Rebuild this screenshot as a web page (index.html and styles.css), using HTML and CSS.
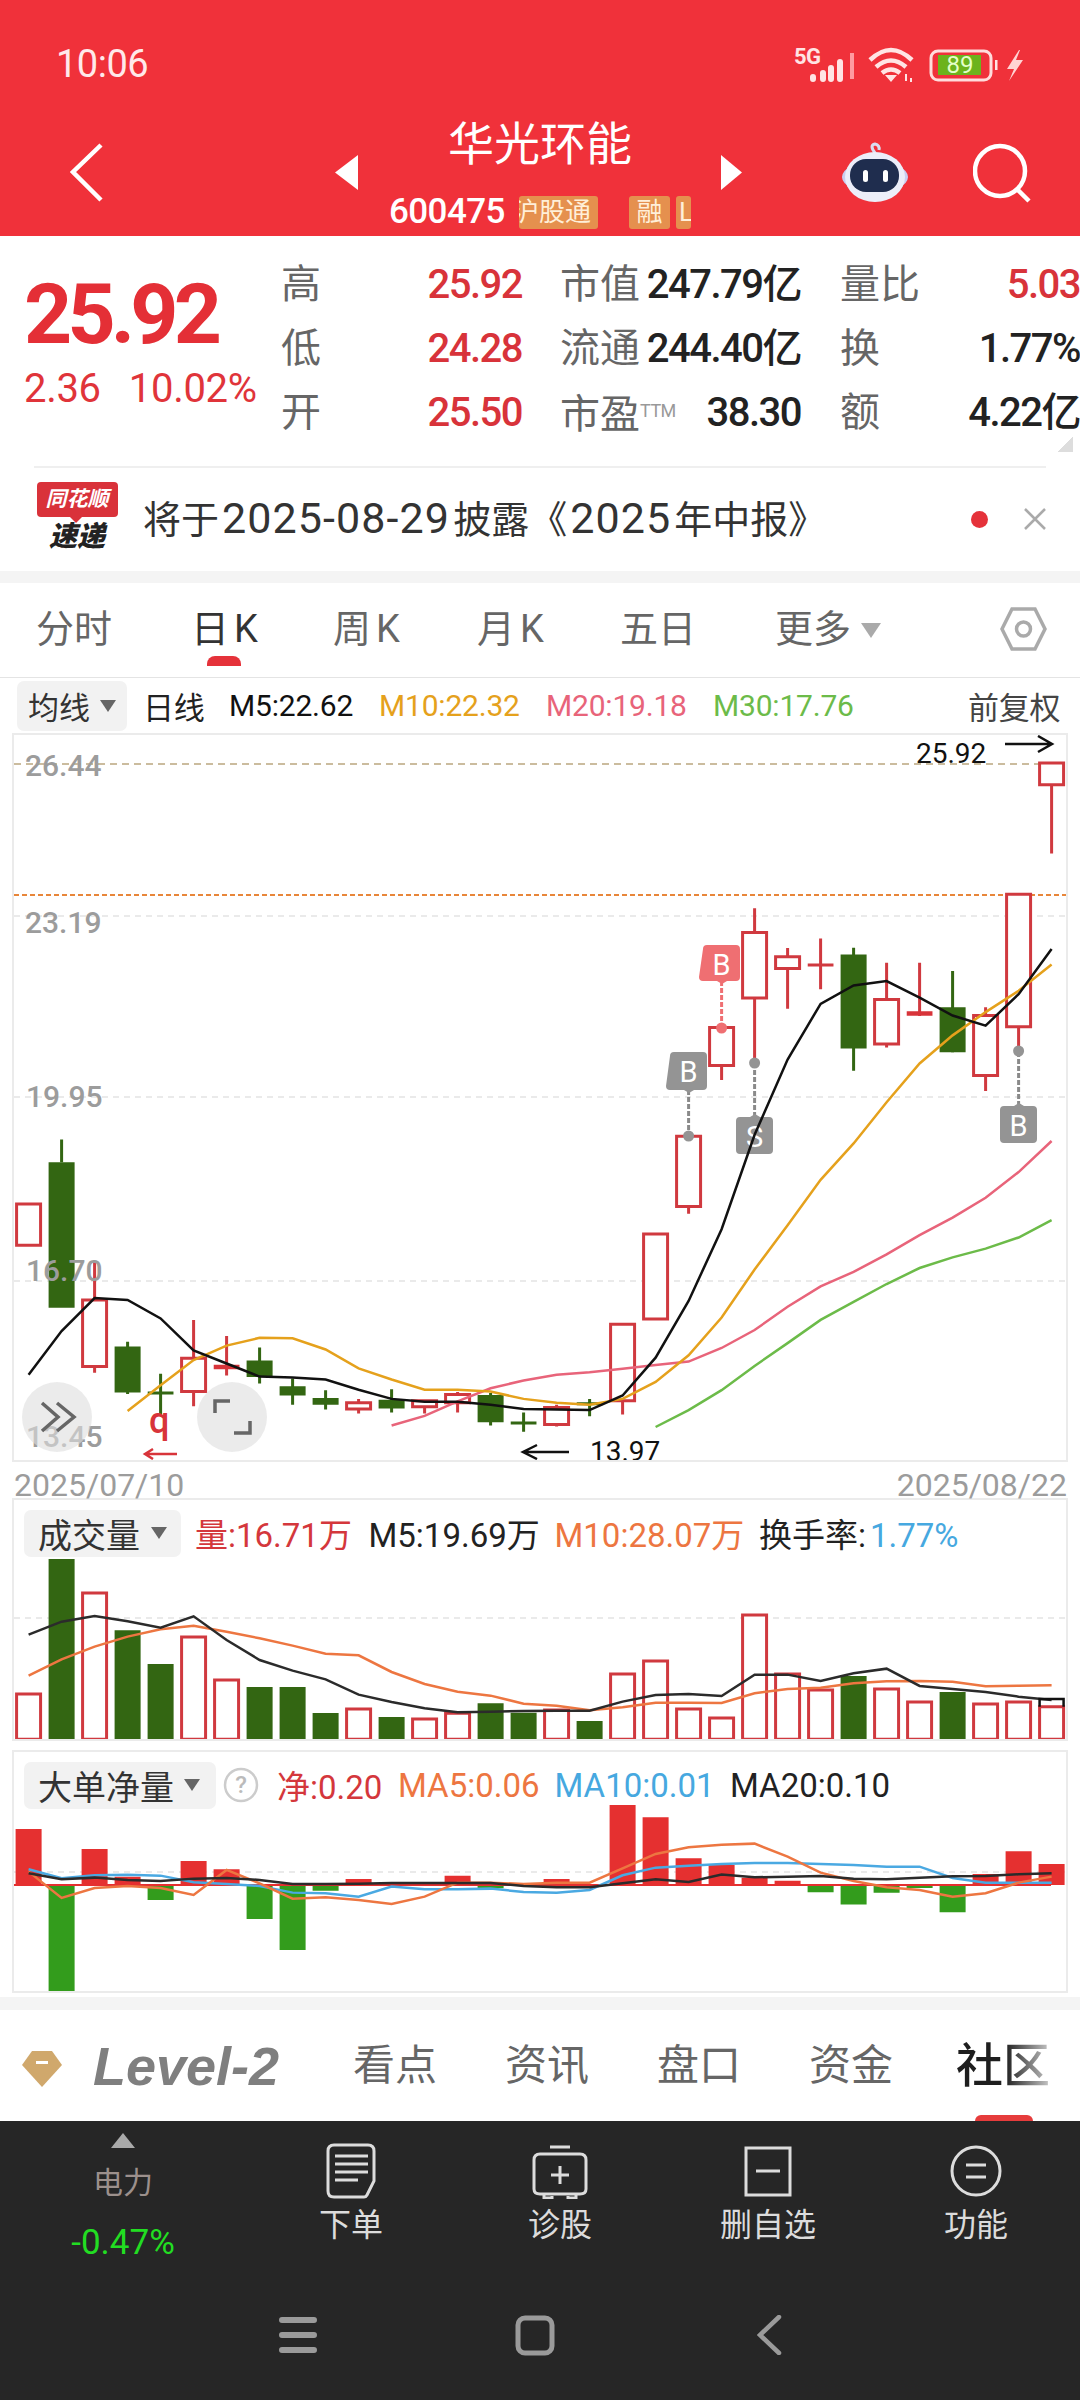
FILE: index.html
```html
<!DOCTYPE html>
<html lang="zh-CN">
<head>
<meta charset="utf-8">
<title>华光环能</title>
<link rel="stylesheet" href="styles.css">
</head>
<body>
<div class="page">
  <header class="header">
    <div class="status">
      <span class="time">10:06</span>
      <svg class="status-icons" width="235" height="40" viewBox="792 45 235 40">
        <text class="st-5g" x="794" y="64">5G</text>
        <path class="st-bars" d="M813 77v2M823 73v6M831 68v11M840 62v17"/>
        <path class="st-bar-last" d="M852 53v26"/>
        <path class="st-wifi" d="M870 60Q891 40 912 60M876 67Q891 54 906 67M882 73Q891 66 900 73"/>
        <path class="st-fill" d="M885 75h12l-6 7zM905 74v7h2v-7zM910 78v4h2v-4z"/>
        <rect class="st-batt" x="931" y="51" width="60" height="29" rx="7"/>
        <rect class="st-level" x="938" y="55" width="43" height="20"/>
        <text class="st-pct" x="960" y="73">89</text>
        <rect class="st-fill" x="995" y="60" width="2.5" height="10"/>
        <path class="st-bolt" d="M1019 50L1007 69h7l-5 12 14-21h-7l4-10z"/>
      </svg>
    </div>
    <div class="nav">
      <svg class="nav-back" width="33" height="59" viewBox="0 0 33 59"><path d="M31 2L3 29l28 28"/></svg>
      <svg class="nav-prev" width="23" height="35" viewBox="0 0 23 35"><path d="M23 0v35L0 17.500z"/></svg>
      <div class="stock">
        <div class="stock-name">华光环能</div>
        <div class="stock-sub">
          <span class="stock-code">600475</span>
          <span class="tag tag-hgt"><span class="tag-cut">沪股通</span></span>
          <span class="tag tag-rong">融</span>
          <span class="tag tag-l">L</span>
        </div>
      </div>
      <svg class="nav-next" width="21" height="35" viewBox="0 0 21 35"><path d="M0 0v35L21 17.500z"/></svg>
      <svg class="nav-robot" width="66" height="60" viewBox="842 141 66 60">
        <path class="rb-ant" d="M875 152q-6-8 0-9 5 1 4 6"/>
        <ellipse class="rb-ear" cx="875" cy="176" rx="33" ry="16"/>
        <ellipse class="rb-head" cx="875" cy="176" rx="30" ry="25"/>
        <rect class="rb-face" x="850" y="158" width="49" height="33" rx="16"/>
        <rect class="rb-eye" x="863" y="169" width="5" height="12" rx="2.500"/>
        <rect class="rb-eye" x="883" y="169" width="5" height="12" rx="2.500"/>
      </svg>
      <svg class="nav-search" width="58" height="62" viewBox="973 142 58 62"><circle cx="1000" cy="172" r="25"/><path d="M1017 190l12 12"/></svg>
    </div>
  </header>

  <section class="quote">
    <div class="quote-main">
      <div class="price-box">
        <div class="price">25.92</div>
        <div class="change"><span>2.36</span><span>10.02%</span></div>
      </div>
      <div class="stats">
        <span class="s-label">高</span><span class="s-val red">25.92</span>
        <span class="s-label">市值</span><span class="s-val">247.79亿</span>
        <span class="s-label">量比</span><span class="s-val red">5.03</span>
        <span class="s-label">低</span><span class="s-val red">24.28</span>
        <span class="s-label">流通</span><span class="s-val">244.40亿</span>
        <span class="s-label">换</span><span class="s-val">1.77%</span>
        <span class="s-label">开</span><span class="s-val red">25.50</span>
        <span class="s-label">市盈<span class="ttm">TTM</span></span><span class="s-val">38.30</span>
        <span class="s-label">额</span><span class="s-val">4.22亿</span>
      </div>
    </div>
    <div class="corner-row"><span class="corner"></span></div>
    <div class="notice">
      <div class="logo">
        <span class="logo-top">同花顺</span>
        <span class="logo-bot">速递</span>
      </div>
      <span class="notice-text">将于<span class="num">2025-08-29</span>披露《<span class="num">2025</span>年中报》</span>
      <span class="notice-dot"></span>
      <svg class="notice-x" width="22" height="22" viewBox="0 0 22 22"><path d="M1 1l20 20M21 1L1 21"/></svg>
    </div>
  </section>

  <nav class="tabs">
    <span class="tab">分时</span>
    <span class="tab tab-on">日K</span>
    <span class="tab">周K</span>
    <span class="tab">月K</span>
    <span class="tab">五日</span>
    <span class="tab tab-more">更多<i class="tri-more"></i></span>
    <svg class="tab-gear" width="47" height="44" viewBox="0 0 47 44"><path d="M12 2h23l10 20-10 20H12L2 22z"/><circle cx="23.500" cy="22" r="7"/></svg>
  </nav>

  <div class="ma-row">
    <span class="pick pick-ma">均线<i class="tri"></i></span>
    <span class="ma dark">日线</span>
    <span class="ma black">M5:22.62</span>
    <span class="ma c-m10">M10:22.32</span>
    <span class="ma c-m20">M20:19.18</span>
    <span class="ma c-m30">M30:17.76</span>
    <span class="ma fq">前复权</span>
  </div>

  <div class="chart chart-main">
    <svg class="plot-svg" width="1052" height="725" viewBox="14 735 1052 725">
      <path class="grid-gray" d="M14 916H1066M14 1097H1066M14 1281H1066"/>
      <path class="grid-tan" d="M14 764H1066"/>
      <path class="grid-orange" d="M14 895H1066"/>
      <g class="plot" transform="translate(28.600 730) scale(33 .4847)">
        <path class="wick-g" d="M1 845V892M3 1262V1370M4 1328V1415M7 1274V1348M8 1338V1392M9 1362V1402M11 1360V1408M14 1368V1435M15 1408V1448M17 1380V1416M25 449V703M28 497V665M3.610 1368h.78M14.610 1430h.78M16.610 1390h.78"/>
        <path class="wick-r" d="M2 1098V1326M5 1217V1395M6 1250V1332M10 1380V1410M12 1384V1410M13 1366V1408M16 1392V1437M18 1226V1412M20 838V998M21 614V722M22 368V690M23 450V575M24 430V535M26 480V655M27 480V590M29 572V745M30 612V665M31 68V255M23.610 485h.78"/>
        <path class="doji" d="M5.610 1314h.78M26.610 585h.78"/>
        <path class="body-g" d="M.606 892h.788V1192h-.788zM2.606 1272h.788V1367h-.788zM6.606 1301h.788V1335h-.788zM7.606 1354h.788V1373h-.788zM8.606 1378h.788V1392h-.788zM10.606 1382h.788V1400h-.788zM13.606 1372h.788V1428h-.788zM24.606 463h.788V657h-.788zM27.606 572h.788V665h-.788z"/>
        <path class="body-r" d="M-.364 978h.727V1063h-.727zM1.636 1176h.727V1313h-.727zM4.636 1296h.727V1365h-.727zM9.636 1388h.727V1401h-.727zM11.636 1384h.727V1396h-.727zM12.636 1371h.727V1388h-.727zM15.636 1398h.727V1433h-.727zM17.636 1226h.727V1384h-.727zM18.636 1040h.727V1215h-.727zM19.636 838h.727V983h-.727zM20.636 614h.727V692h-.727zM21.636 418h.727V553h-.727zM22.636 468h.727V492h-.727zM25.636 556h.727V648h-.727zM28.636 589h.727V713h-.727zM29.636 339h.727V612h-.727zM30.636 68h.727V113h-.727z"/>
      </g>
      <g class="axis">
        <text x="25" y="776">26.44</text>
        <text x="25" y="933">23.19</text>
        <text x="26" y="1107">19.95</text>
        <text x="26" y="1281">16.70</text>
        <text x="26" y="1447">13.45</text>
      </g>
      <g class="trade-gray">
        <path class="trade-dash" d="M688.600 1090V1136"/>
        <circle cx="688.600" cy="1136" r="5.500"/>
        <path d="M670 1056q0-4 4-4h29q4 0 4 4v30q0 4-4 4h-9l-5 3-5-3h-14q-4 0-4-4z"/>
        <text x="688.600" y="1082">B</text>
        <path class="trade-dash" d="M754.600 1117V1063"/>
        <circle cx="754.600" cy="1063" r="5.500"/>
        <path d="M736 1121q0-4 4-4h10l5-3 5 3h9q4 0 4 4v29q0 4-4 4h-29q-4 0-4-4z"/>
        <text x="754.600" y="1147">S</text>
        <path class="trade-dash" d="M1018.600 1106V1051"/>
        <circle cx="1018.600" cy="1051" r="5.500"/>
        <path d="M1000 1110q0-4 4-4h10l5-3 5 3h9q4 0 4 4v29q0 4-4 4h-29q-4 0-4-4z"/>
        <text x="1018.600" y="1136">B</text>
      </g>
      <g class="trade-pink">
        <path class="trade-dash" d="M721.600 981V1028"/>
        <circle cx="721.600" cy="1028" r="5.500"/>
        <path d="M703 949q0-4 4-4h29q4 0 4 4v28q0 4-4 4h-9l-5 3-5-3h-14q-4 0-4-4z"/>
        <text x="721.600" y="975">B</text>
      </g>
      <g class="plot" transform="translate(28.600 730) scale(33 .4847)">
        <polyline class="ln-green" points="19,1438 20,1403 21,1362 22,1312 23,1265 24,1217 25,1180 26,1143 27,1110 28,1088 29,1070 30,1047 31,1011"/>
        <polyline class="ln-pink" points="11,1435 12,1415 13,1385 14,1358 15,1342 16,1330 17,1325 18,1318 19,1310 20,1303 21,1275 22,1238 23,1190 24,1148 25,1118 26,1082 27,1042 28,1006 29,965 30,912 31,848"/>
        <polyline class="ln-gold" points="3,1405 4,1352 5,1300 6,1270 7,1254 8,1255 9,1278 10,1317 11,1340 12,1361 13,1361 14,1365 15,1380 16,1388 17,1392 18,1380 19,1345 20,1290 21,1212 22,1113 23,1022 24,928 25,853 26,768 27,688 28,630 29,582 30,538 31,484"/>
        <polyline class="ln-black" points="0,1330 1,1240 2,1172 3,1176 4,1214 5,1280 6,1307 7,1334 8,1336 9,1340 10,1361 11,1380 12,1386 13,1386 14,1392 15,1401 16,1402 17,1403 18,1373 19,1295 20,1178 21,1030 22,835 23,680 24,565 25,527 26,518 27,552 28,589 29,610 30,545 31,452"/>
      </g>
      <text class="mark" x="916" y="763">25.92</text>
      <path class="arrow" d="M1005 744H1052M1038 736L1052 744 1038 752"/>
      <text class="mark" x="590" y="1461">13.97</text>
      <path class="arrow" d="M569 1452H523M537 1445L523 1452 537 1459"/>
      <text class="mark-q" x="149" y="1433">q</text>
      <path class="arrow-red" d="M177 1454H145M153 1449L145 1454 153 1459"/>
      <circle class="float-btn" cx="57" cy="1417" r="35"/>
      <path class="float-ico" d="M42 1403L58 1417 42 1431M57 1403L74 1417 57 1431"/>
      <circle class="float-btn" cx="232" cy="1417" r="35"/>
      <path class="float-ico" d="M215 1413V1401H230M250 1421V1433H234"/>
    </svg>
  </div>

  <div class="dates"><span>2025/07/10</span><span>2025/08/22</span></div>

  <div class="chart chart-sub">
    <div class="sub-head head-vol">
      <span class="pick pick-vol">成交量<i class="tri"></i></span>
      <span class="c-red">量:16.71万</span>
      <span class="c-ink">M5:19.69万</span>
      <span class="c-orange">M10:28.07万</span>
      <span class="c-ink">换手率:<span class="c-blue rate">1.77%</span></span>
    </div>
    <svg class="plot-svg" width="1052" height="239" viewBox="14 1500 1052 239">
      <path class="grid-gray" d="M14 1618H1066"/>
      <g class="plot" transform="translate(28.600 1480) scale(33 .3333)">
        <path class="body-g" d="M.606 237h.788V778h-.788zM2.606 451h.788V778h-.788zM3.606 552h.788V778h-.788zM6.606 621h.788V778h-.788zM7.606 621h.788V778h-.788zM8.606 699h.788V778h-.788zM10.606 711h.788V778h-.788zM13.606 670h.788V778h-.788zM14.606 698h.788V778h-.788zM16.606 723h.788V778h-.788zM24.606 588h.788V778h-.788zM27.606 636h.788V778h-.788z"/>
        <path class="body-r" d="M-.364 642h.727V778h-.727zM1.636 339h.727V778h-.727zM4.636 471h.727V778h-.727zM5.636 600h.727V778h-.727zM9.636 687h.727V778h-.727zM11.636 717h.727V778h-.727zM12.636 700h.727V778h-.727zM15.636 690h.727V778h-.727zM17.636 582h.727V778h-.727zM18.636 543h.727V778h-.727zM19.636 687h.727V778h-.727zM20.636 714h.727V778h-.727zM21.636 405h.727V778h-.727zM22.636 582h.727V778h-.727zM23.636 630h.727V778h-.727zM25.636 627h.727V778h-.727zM26.636 666h.727V778h-.727zM28.636 672h.727V778h-.727zM29.636 666h.727V778h-.727zM30.636 680h.727V778h-.727z"/>
        <polyline class="ln-orange" points="0,587 1,538 2,500 3,470 4,448 5,437 6,455 7,475 8,497 9,521 10,526 11,576 12,612 13,635 14,647 15,671 16,677 17,691 18,682 19,668 20,668 21,669 22,640 23,627 24,623 25,610 26,604 27,603 28,605 29,619 30,617 31,616"/>
        <polyline class="ln-ink" points="0,464 1,425 2,408 3,424 4,443 5,409 6,480 7,540 8,572 9,598 10,644 11,666 12,685 13,697 14,695 15,693 16,692 17,692 18,665 19,645 20,642 21,648 22,584 23,584 24,603 25,580 26,566 27,618 28,627 29,636 30,650 31,660"/>
        <path class="vol-cap" d="M30.636 680V657h.727V680"/>
      </g>
    </svg>
  </div>

  <div class="chart chart-sub chart-net">
    <div class="sub-head head-net">
      <span class="pick-wrap">
        <span class="pick pick-net">大单净量<i class="tri"></i></span>
        <svg class="help" width="36" height="36" viewBox="0 0 36 36"><circle cx="18" cy="18" r="16"/><text x="18" y="26">?</text></svg>
      </span>
      <span class="c-red">净:0.20</span>
      <span class="c-orange">MA5:0.06</span>
      <span class="c-blue">MA10:0.01</span>
      <span class="c-ink">MA20:0.10</span>
    </div>
    <svg class="plot-svg" width="1052" height="239" viewBox="14 1752 1052 239">
      <path class="grid-gray" d="M14 1872H1066"/>
      <g class="plot" transform="translate(28.600 1480) scale(33 .3333)">
        <path class="net-g" d="M.606 1215h.788V1535h-.788zM3.606 1215h.788V1260h-.788zM6.606 1215h.788V1317h-.788zM7.606 1215h.788V1410h-.788zM8.606 1215h.788V1232h-.788zM13.606 1215h.788V1225h-.788zM23.606 1215h.788V1237h-.788zM24.606 1215h.788V1274h-.788zM25.606 1215h.788V1238h-.788zM26.606 1215h.788V1224h-.788zM27.606 1215h.788V1297h-.788z"/>
        <path class="net-r" d="M-.394 1047h.788V1215h-.788zM1.606 1107h.788V1215h-.788zM2.606 1190h.788V1215h-.788zM4.606 1143h.788V1215h-.788zM5.606 1168h.788V1215h-.788zM9.606 1197h.788V1215h-.788zM12.606 1187h.788V1215h-.788zM15.606 1197h.788V1215h-.788zM17.606 975h.788V1215h-.788zM18.606 1012h.788V1215h-.788zM19.606 1135h.788V1215h-.788zM20.606 1155h.788V1215h-.788zM21.606 1193h.788V1215h-.788zM22.606 1202h.788V1215h-.788zM28.606 1182h.788V1215h-.788zM29.606 1114h.788V1215h-.788zM30.606 1152h.788V1215h-.788z"/>
      </g>
      <path class="net-base" d="M14 1885H1051"/>
      <g class="plot" transform="translate(28.600 1480) scale(33 .3333)">
        <polyline class="ln-blue" points="0,1168 1,1195 2,1186 3,1184 4,1187 5,1207 6,1212 7,1218 8,1238 9,1240 10,1250 11,1220 12,1228 13,1228 14,1226 15,1236 16,1238 17,1230 18,1186 19,1163 20,1157 21,1152 22,1149 23,1149 24,1152 25,1155 26,1160 27,1160 28,1194 29,1208 30,1208 31,1208"/>
        <polyline class="ln-orange" points="0,1175 1,1254 2,1224 3,1218 4,1224 5,1245 6,1170 7,1210 8,1256 9,1252 10,1260 11,1272 12,1250 13,1208 14,1208 15,1212 16,1208 17,1208 18,1165 19,1122 20,1102 21,1094 22,1091 23,1130 24,1178 25,1203 26,1222 27,1230 28,1250 29,1240 30,1208 31,1190"/>
        <polyline class="ln-ink" points="0,1180 1,1198 2,1193 3,1200 4,1203 5,1196 6,1194 7,1200 8,1212 9,1212 10,1211 11,1209 12,1209 13,1209 14,1209 15,1218 16,1222 17,1222 18,1210 19,1198 20,1206 21,1184 22,1192 23,1190 24,1188 25,1196 26,1198 27,1193 28,1189 29,1188 30,1183 31,1180"/>
      </g>
    </svg>
  </div>

  <div class="band-bottom"></div>

  <nav class="bottom-tabs">
    <svg class="gem" width="40" height="36" viewBox="0 0 40 36"><path d="M10 0h20l10 14-20 22L0 14z"/><rect x="14" y="10" width="12" height="3"/></svg>
    <span class="level">Level-2</span>
    <span class="btab">看点</span>
    <span class="btab">资讯</span>
    <span class="btab">盘口</span>
    <span class="btab">资金</span>
    <span class="btab btab-on">社区</span>
    <i class="btab-mark"></i>
  </nav>

  <footer class="dock">
    <div class="dock-grid">
      <div class="dock-item dock-sector">
        <i class="tri-up"></i>
        <span class="sector-name">电力</span>
        <span class="sector-pct">-0.47%</span>
      </div>
      <div class="dock-item">
        <svg class="dock-ico" width="60" height="56" viewBox="0 0 60 56"><path d="M13 2h34q6 0 6 6v30l-7 14q-1 2-3 2H13q-6 0-6-6V8q0-6 6-6zM14 13h33M14 21h33M14 29h33M14 37h23"/></svg>
        <span class="dock-label">下单</span>
      </div>
      <div class="dock-item">
        <svg class="dock-ico" width="60" height="56" viewBox="0 0 60 56"><path d="M20 4h20M10 11h40q6 0 6 6v29q0 5-6 5H10q-6 0-6-5V17q0-6 6-6zM14 51v4h8v-2M38 53v2h8v-4M30 23v18M21 32h18"/></svg>
        <span class="dock-label">诊股</span>
      </div>
      <div class="dock-item">
        <svg class="dock-ico" width="60" height="56" viewBox="0 0 60 56"><path d="M8 5h44v47H8zM18 28h24"/></svg>
        <span class="dock-label">删自选</span>
      </div>
      <div class="dock-item">
        <svg class="dock-ico" width="60" height="56" viewBox="0 0 60 56"><circle cx="30" cy="28" r="24"/><path d="M20 22h20M20 34h20"/></svg>
        <span class="dock-label">功能</span>
      </div>
    </div>
    <div class="sys-nav">
      <svg class="sys-menu" width="38" height="36" viewBox="0 0 38 36"><path d="M3 3h32M3 18h32M3 33h32"/></svg>
      <svg class="sys-home" width="40" height="41" viewBox="0 0 40 41"><rect x="3" y="3" width="34" height="35" rx="7"/></svg>
      <svg class="sys-back" width="25" height="40" viewBox="0 0 25 40"><path d="M22 2L3 20l19 18"/></svg>
    </div>
  </footer>
</div>
</body>
</html>
```

FILE: styles.css
```css
* { box-sizing: border-box; }
html, body { margin: 0; padding: 0; background: #fff; }
body { font-family: Roboto, "Noto Sans CJK SC", sans-serif; }
i { display: block; font-style: normal; }
.page { width: 1080px; height: 2400px; overflow: hidden; display: flex; flex-direction: column; }

/* header */
.header { height: 236px; background: #f0313a; color: #fff; flex: none; }
.status { height: 100px; padding: 44px 53px 0 56px; display: flex; align-items: flex-start; justify-content: space-between; }
.time { font-size: 38px; line-height: 40px; color: #ffe9ea; letter-spacing: -.5px; }
.status-icons { margin-top: 1px; }
.st-5g { font: 700 22px Roboto, sans-serif; fill: #ffe4e4; letter-spacing: -.5px; }
.st-bars, .st-bar-last { fill: none; stroke: #ffe4e4; stroke-width: 6; stroke-linecap: round; }
.st-bar-last { stroke: #ff9aa0; stroke-linecap: butt; stroke-width: 4; }
.st-wifi { fill: none; stroke: #ffe4e4; stroke-width: 4.500; }
.st-fill { fill: #ffe4e4; }
.st-batt { fill: none; stroke: #ffdcdc; stroke-width: 3; }
.st-level { fill: #6cb31c; }
.st-pct { font: 400 24px Roboto, sans-serif; fill: #e4ffc8; text-anchor: middle; }
.st-bolt { fill: #ffd3d3; }

.nav { height: 136px; padding: 8px 0 0 70px; display: flex; align-items: center; }
.nav-back path { fill: none; stroke: #fff; stroke-width: 4.500; }
.nav-prev { margin-left: 232px; fill: #fff; }
.nav-next { margin-left: 30px; fill: #fff; }
.stock { width: 302px; margin-left: 31px; display: flex; flex-direction: column; align-items: center; }
.stock-name { font-size: 46px; line-height: 48px; }
.stock-sub { width: 302px; margin-top: 23px; height: 42px; margin-bottom: -9px; display: flex; align-items: center; }
.stock-code { width: 130px; font-size: 35px; font-weight: 500; line-height: 42px; letter-spacing: -.6px; flex: none; }
.tag { height: 33px; background: #e5904e; color: #ffefd9; font-size: 26px; line-height: 33px; border-radius: 3px; flex: none; text-align: center; }
.tag-hgt { width: 79px; white-space: nowrap; overflow: hidden; }
.tag-cut { display: block; margin-left: -6px; text-align: left; }
.tag-rong { width: 41px; margin-left: 31px; }
.tag-l { width: 15px; margin-left: 6px; text-align: left; padding-left: 3px; overflow: hidden; }
.nav-robot { margin-left: 100px; }
.rb-ant { fill: none; stroke: #d9dcf0; stroke-width: 3; }
.rb-ear { fill: #c9cdf0; }
.rb-head { fill: #eceef9; }
.rb-face { fill: #1f2d4e; }
.rb-eye { fill: #fff; }
.nav-search { margin-left: 65px; fill: none; stroke: #fff; stroke-width: 4.500; }

/* quote */
.quote { height: 335px; flex: none; display: flex; flex-direction: column; }
.quote-main { height: 201px; padding-top: 17px; display: flex; flex: none; }
.price-box { width: 281px; flex: none; padding-left: 24px; }
.price { font-size: 84px; font-weight: 700; line-height: 84px; margin: 20px 0 0 0; color: #e42f36; letter-spacing: -4.800px; }
.change { display: flex; gap: 28px; margin-top: 9px; font-size: 40px; line-height: 46px; color: #e0343a; letter-spacing: -.3px; }
.stats { flex: 1; display: grid; grid-template-columns: 80px 161px 80px 199px 80px 199px; grid-auto-rows: 64px; align-items: center; }
.stats .s-label:nth-child(6n+3) { margin-left: 38px; width: 120px; }
.stats .s-label:nth-child(6n+5) { margin-left: 39px; width: 100px; }
.s-label { font-size: 40px; line-height: 48px; color: #666; white-space: nowrap; }
.s-val { font-size: 40px; font-weight: 500; line-height: 48px; text-align: right; color: #222; white-space: nowrap; letter-spacing: -1.500px; }
.s-val.red { color: #d8333a; }
.ttm { font-size: 18px; font-weight: 400; color: #999; vertical-align: 11px; letter-spacing: -.5px; }
.corner-row { height: 29px; padding-right: 7px; display: flex; justify-content: flex-end; flex: none; }
.corner { width: 16px; height: 15px; background: linear-gradient(to bottom right, transparent 50%, #ddd 50%); }
.notice { height: 104px; margin: 0 34px; border-top: 2px solid #efefef; display: flex; align-items: center; flex: none; }
.logo { width: 82px; margin-left: 2px; margin-top: -4px; display: flex; flex-direction: column; align-items: center; flex: none; }
.logo-top { width: 81px; height: 35px; background: #d9323a; color: #fff; font-size: 21px; line-height: 35px; font-weight: 700; font-style: italic; text-align: center; border-radius: 4px; white-space: nowrap; position: relative; }
.logo-top::after { content: ""; position: absolute; left: 33px; top: 35px; border: 6px solid transparent; border-top: 6px solid #d9323a; border-bottom: 0; }
.logo-bot { font-size: 28px; line-height: 30px; margin-top: 5px; font-weight: 900; font-style: italic; color: #222; white-space: nowrap; }
.notice-text { margin-left: 25px; font-size: 38px; line-height: 48px; color: #333; white-space: nowrap; }
.num { font-size: 43px; letter-spacing: 1.100px; margin: 0 3px; }
.notice-dot { width: 17px; height: 17px; border-radius: 50%; background: #e5323a; margin-left: auto; flex: none; }
.notice-x { margin-left: 36px; flex: none; fill: none; stroke: #aaa; stroke-width: 2.500; }

/* tabs */
.tabs { height: 107px; flex: none; border-top: 12px solid #f4f4f4; border-bottom: 1px solid #e4e4e4; padding-left: 36px; display: grid; grid-template-columns: 155px 142px 144px 143px 155px 225px auto; align-items: center; }
.tab { font-size: 38px; line-height: 48px; color: #666; margin-top: -2px; letter-spacing: 5px; white-space: nowrap; display: flex; align-items: center; }
.tab:first-child, .tab:nth-child(5) { letter-spacing: 0; }
.tab-on { color: #333; position: relative; }
.tab-on::after { content: ""; position: absolute; left: 16px; top: 51px; width: 34px; height: 10px; background: #e5323a; border-radius: 8px 8px 0 0; }
.tab-more { letter-spacing: 0; }
.tri-more { width: 0; height: 0; margin: 2px 0 0 10px; border: 10px solid transparent; border-top: 15px solid #aaa; border-bottom: 0; }
.tab-gear { fill: none; stroke: #aaa; stroke-width: 3.500; margin-top: -2px; }

/* MA row */
.ma-row { height: 55px; flex: none; margin-left: 17px; display: grid; grid-template-columns: 126px 86px 150px 167px 167px 255px auto; align-items: center; font-size: 30px; }
.pick { background: #f2f2f2; border-radius: 7px; display: flex; align-items: center; color: #333; white-space: nowrap; }
.pick-ma { width: 110px; height: 50px; padding-left: 11px; font-size: 31px; }
.tri { width: 0; height: 0; border: 8px solid transparent; border-top: 12px solid #666; border-bottom: 0; margin-left: 10px; }
.ma { white-space: nowrap; letter-spacing: -.2px; }
.dark { color: #222; font-size: 31px; }
.black { color: #111; }
.c-m10 { color: #e5a11c; }
.c-m20 { color: #e8647a; }
.c-m30 { color: #6cbb49; }
.fq { color: #444; font-size: 31px; }

/* charts */
.chart { margin: 0 12px; width: 1056px; border: 2px solid #ebebeb; flex: none; position: relative; background: #fff; }
.chart-main { height: 729px; }
.chart-sub { height: 243px; }
.chart-net { margin-top: 9px; }
.plot-svg { display: block; }
.plot * { vector-effect: non-scaling-stroke; }
.grid-gray { fill: none; stroke: #e3e3e3; stroke-width: 1.500; stroke-dasharray: 6 5; }
.grid-tan { fill: none; stroke: #baa77f; stroke-width: 1.500; stroke-dasharray: 7 5; }
.grid-orange { fill: none; stroke: #e8863a; stroke-width: 2; stroke-dasharray: 5 3; }
.axis text { font: 500 30px Roboto, sans-serif; fill: #9c9c9c; }
.wick-g { fill: none; stroke: #336612; stroke-width: 3; }
.wick-r { fill: none; stroke: #d0393f; stroke-width: 3; }
.doji { fill: none; stroke: #d8343a; stroke-width: 4.500; }
.body-g { fill: #336612; }
.body-r { fill: #fff; stroke: #d0393f; stroke-width: 3; }
.ln-green, .ln-pink, .ln-gold, .ln-black { fill: none; stroke-width: 2.500; }
.ln-green { stroke: #6cbb49; }
.ln-pink { stroke: #e8647a; }
.ln-gold { stroke: #e5a11c; }
.ln-black { stroke: #111; }
.trade-gray { fill: #949494; }
.trade-pink { fill: #ef6f72; }
.trade-dash { fill: none; stroke: #8a8a8a; stroke-width: 3; stroke-dasharray: 5 2; }
.trade-pink .trade-dash { stroke: #ef6f72; }
.trade-gray text, .trade-pink text { font: 400 29px Roboto, sans-serif; fill: #fff; text-anchor: middle; }
.mark { font: 400 28px Roboto, sans-serif; fill: #111; }
.mark-q { font: 500 36px Roboto, sans-serif; fill: #d8343a; }
.arrow { fill: none; stroke: #111; stroke-width: 2.500; }
.arrow-red { fill: none; stroke: #d8343a; stroke-width: 2.500; }
.float-btn { fill: rgba(222, 222, 222, .6); }
.float-ico { fill: none; stroke: #666; stroke-width: 3.500; }

.dates { height: 36px; flex: none; margin: 0 13px 0 14px; display: flex; justify-content: space-between; align-items: flex-end; font-size: 32px; line-height: 36px; color: #9c9c9c; position: relative; z-index: 1; }
.dates span { margin-bottom: -5px; }

.sub-head { position: absolute; left: 10px; display: grid; align-items: center; font-size: 33px; white-space: nowrap; z-index: 1; }
.head-vol { top: 9px; grid-template-columns: 171px 173.500px 186px 204.500px auto; }
.head-net { top: 9px; grid-template-columns: 253px 121px 156.500px 175.500px auto; }
.pick-vol { width: 157px; height: 47px; padding-left: 14px; font-size: 34px; }
.pick-vol .tri { margin-left: 11px; }
.pick-net { width: 192px; height: 47px; padding-left: 14px; font-size: 34px; }
.pick-wrap { display: flex; align-items: center; gap: 7px; }
.help { flex: none; }
.help circle { fill: none; stroke: #ccc; stroke-width: 2.500; }
.help text { font: 500 24px Roboto, sans-serif; fill: #bbb; text-anchor: middle; }
.c-red { color: #d4373c; }
.c-ink { color: #222; }
.c-orange { color: #ed7641; }
.c-blue { color: #46a8e0; }
.rate { margin-left: 4px; }
.ln-orange, .ln-ink, .ln-blue { fill: none; stroke-width: 2.500; }
.ln-orange { stroke: #ed7641; }
.ln-ink { stroke: #2b2b2b; }
.ln-blue { stroke: #4aa9e2; }
.vol-cap { fill: none; stroke: #111; stroke-width: 2.500; }
.net-g { fill: #339c1c; }
.net-r { fill: #e53030; }
.net-base { fill: none; stroke: #e53030; stroke-width: 2; }

/* bottom tabs */
.band-bottom { height: 17px; flex: none; background: linear-gradient(#fff 4px, #f4f4f4 4px); }
.bottom-tabs { height: 111px; flex: none; position: relative; display: flex; align-items: center; padding-left: 22px; }
.gem { fill: #d0a86c; flex: none; margin-top: 6px; }
.gem rect { fill: #fff; }
.level { width: 291px; padding-left: 31px; font: italic 700 54px "Liberation Sans", sans-serif; color: #7f7f7f; letter-spacing: 0; white-space: nowrap; flex: none; }
.btab { font-size: 42px; line-height: 50px; color: #666; width: 152px; flex: none; white-space: nowrap; }
.btab-on { font-size: 47px; font-weight: 500; width: auto; margin-left: -5px; background: linear-gradient(90deg, #1e1e1e 52%, #c8c8c8 100%); -webkit-background-clip: text; background-clip: text; color: transparent; }
.btab-mark { position: absolute; left: 975px; bottom: 0; width: 58px; height: 6px; background: #e63c3c; border-radius: 6px 6px 0 0; }

/* dock */
.dock { flex: 1; background: #262626; display: flex; flex-direction: column; }
.dock-grid { height: 193px; display: grid; grid-template-columns: 246px 210px 208px 208px 208px; flex: none; }
.dock-item { display: flex; flex-direction: column; align-items: center; padding-top: 22px; }
.dock-ico { fill: none; stroke: #dcdcdc; stroke-width: 3; flex: none; }
.dock-label { margin-top: 6px; font-size: 32px; line-height: 40px; color: #dcdcdc; white-space: nowrap; }
.dock-sector { padding-top: 12px; }
.tri-up { width: 0; height: 0; border: 12px solid transparent; border-bottom: 15px solid #aaa; border-top: 0; }
.sector-name { margin-top: 17px; font-size: 30px; line-height: 36px; color: #9c908c; }
.sector-pct { margin-top: 24px; font-size: 35px; line-height: 36px; color: #22dd22; }
.sys-nav { height: 42px; display: grid; grid-template-columns: 279px 42px 194px 40px 202px 25px; align-items: center; }
.sys-menu { grid-column: 2; fill: none; stroke: #9a9a9a; stroke-width: 6; stroke-linecap: round; }
.sys-home { grid-column: 4; fill: none; stroke: #9a9a9a; stroke-width: 5; }
.sys-back { grid-column: 6; fill: none; stroke: #9a9a9a; stroke-width: 4.500; stroke-linecap: round; }
```
